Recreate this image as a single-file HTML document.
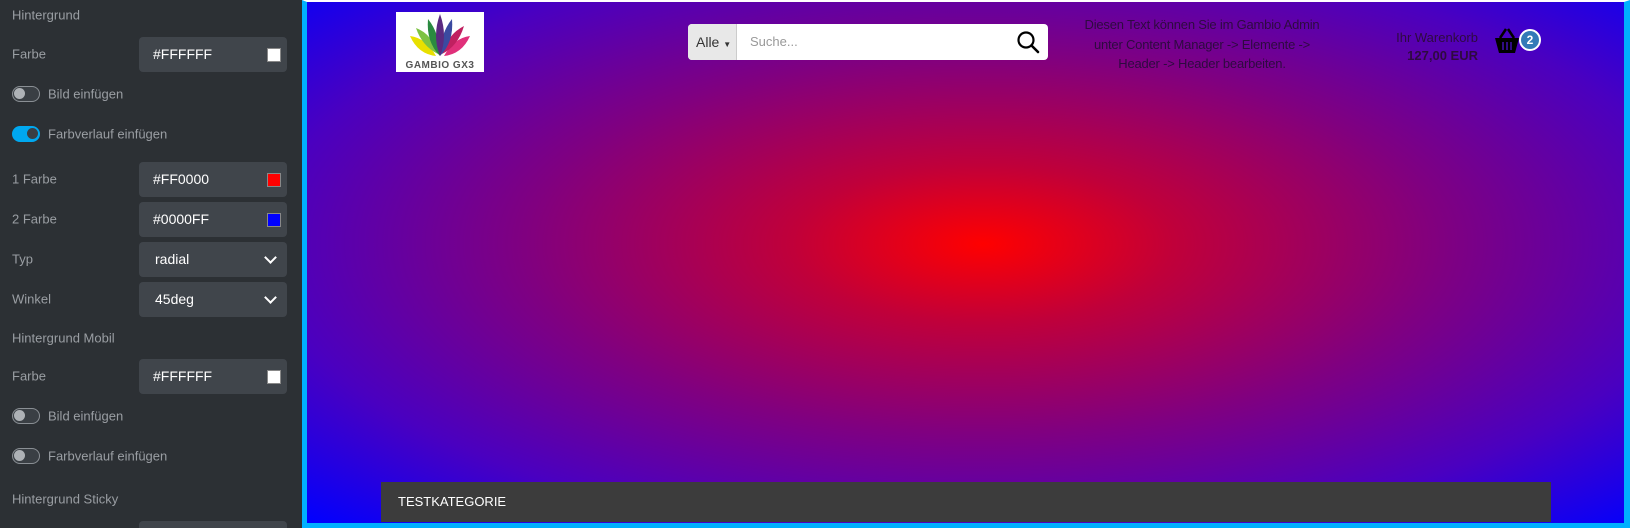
<!DOCTYPE html>
<html style="overflow:hidden;height:528px"><head><meta charset="utf-8"><style>
*{box-sizing:border-box;margin:0;padding:0}
body{width:1630px;height:528px;overflow:hidden;background:#fff;font-family:"Liberation Sans",sans-serif;position:relative}
#side{position:absolute;left:0;top:0;width:302px;height:528px;background:#2c3034;color:#9a9ea3;font-size:13px;overflow:hidden}
.lbl{position:absolute;left:12px;transform:translateY(-50%)}
.inp{position:absolute;left:139px;width:148px;height:35px;background:#40454b;border-radius:4px;color:#fff;font-size:14px;line-height:35px;padding-left:14px}
.sw{position:absolute;right:6px;top:11px;width:14px;height:14px;border:1px solid #888}
.chev{position:absolute;right:12px;top:11px;width:9px;height:9px;border-right:2px solid #fff;border-bottom:2px solid #fff;transform:rotate(45deg)}
.tg{position:absolute;left:12px;width:28px;height:16px;border-radius:8px;border:1.5px solid #8a8f94;background:#3a3f44}
.tg i{position:absolute;left:1px;top:1px;width:11px;height:11px;border-radius:50%;background:#aeb2b6}
.tg.on{background:#00a8f0;border-color:#00a8f0}
.tg.on i{left:auto;right:1px;background:#3a3f44}
.tl{position:absolute;left:48px;transform:translateY(-50%)}
#frame{position:absolute;left:302px;top:0;width:1328px;height:528px;border:5px solid #00b0ff;border-top:2px solid #fff;border-right-width:6px;overflow:hidden;
background:radial-gradient(farthest-corner at 676px 242px,#ff0000 0%,#c0003a 20%,#800080 48%,#4a00c0 75%,#0000ff 100%)}
</style></head><body>
<div id="side">
<div class="lbl" style="top:15px">Hintergrund</div>
<div class="lbl" style="top:54px">Farbe</div><div class="inp" style="top:37px">#FFFFFF<div class="sw" style="background:#fff"></div></div>
<div class="tg" style="top:86px"><i></i></div><div class="tl" style="top:94px">Bild einfügen</div>
<div class="tg on" style="top:126px"><i></i></div><div class="tl" style="top:134px">Farbverlauf einfügen</div>
<div class="lbl" style="top:179px">1 Farbe</div><div class="inp" style="top:162px">#FF0000<div class="sw" style="background:#f00"></div></div>
<div class="lbl" style="top:219px">2 Farbe</div><div class="inp" style="top:202px">#0000FF<div class="sw" style="background:#00f"></div></div>
<div class="lbl" style="top:259px">Typ</div><div class="inp" style="top:242px;padding-left:16px">radial<div class="chev"></div></div>
<div class="lbl" style="top:299px">Winkel</div><div class="inp" style="top:282px;padding-left:16px">45deg<div class="chev"></div></div>
<div class="lbl" style="top:338px">Hintergrund Mobil</div>
<div class="lbl" style="top:376px">Farbe</div><div class="inp" style="top:359px">#FFFFFF<div class="sw" style="background:#fff"></div></div>
<div class="tg" style="top:408px"><i></i></div><div class="tl" style="top:416px">Bild einfügen</div>
<div class="tg" style="top:448px"><i></i></div><div class="tl" style="top:456px">Farbverlauf einfügen</div>
<div class="lbl" style="top:499px">Hintergrund Sticky</div>
<div class="inp" style="top:521px;height:7px;border-radius:4px 4px 0 0"></div>
</div>
<div id="frame">
<div style="position:absolute;left:821px;top:-2px;width:128px;height:2px;background:#f5b800"></div>
<div style="position:absolute;left:89px;top:10px;width:88px;height:60px;background:#fff">
<svg width="88" height="60" viewBox="0 0 88 60">
<path d="M14 24 Q30 26 40 44 Q22 42 14 24Z" fill="#e8e000"/>
<path d="M20 16 Q36 22 42 42 Q26 34 20 16Z" fill="#7dc242"/>
<path d="M74 24 Q58 26 48 44 Q66 42 74 24Z" fill="#e0307a"/>
<path d="M68 14 Q52 22 46 42 Q62 34 68 14Z" fill="#c02060"/>
<path d="M32 7 Q44 22 44 44 Q30 30 32 7Z" fill="#2a8a40"/>
<path d="M56 7 Q44 22 44 44 Q58 30 56 7Z" fill="#3a4aa0"/>
<path d="M44 2 Q52 24 44 44 Q36 24 44 2Z" fill="#5a2a80"/>
<text x="44" y="56" text-anchor="middle" font-size="10" font-weight="bold" fill="#555" font-family="Liberation Sans" letter-spacing="0.5">GAMBIO GX3</text>
</svg></div>
<div style="position:absolute;left:381px;top:22px;width:360px;height:36px;background:#fff;border-radius:4px;overflow:hidden">
<div style="position:absolute;left:0;top:0;width:49px;height:36px;background:#e8e8e8;border-right:1px solid #ccc;font-size:14px;line-height:36px;padding-left:8px;color:#333">Alle <span style="font-size:8px">▼</span></div>
<div style="position:absolute;left:62px;top:0;line-height:36px;font-size:13px;color:#999">Suche...</div>
<svg style="position:absolute;right:8px;top:6px" width="24" height="24" viewBox="0 0 24 24"><circle cx="10" cy="10" r="7.5" fill="none" stroke="#000" stroke-width="2.2"/><path d="M15.5 15.5L22 22" stroke="#000" stroke-width="2.6" stroke-linecap="round"/></svg>
</div>
<div style="position:absolute;left:760px;top:13px;width:270px;text-align:center;font-size:13px;line-height:19.5px;color:#2e0a40;letter-spacing:-0.2px">Diesen Text können Sie im Gambio Admin<br>unter Content Manager -&gt; Elemente -&gt;<br>Header -&gt; Header bearbeiten.</div>
<div style="position:absolute;right:146px;top:27px;text-align:right;font-size:13px;line-height:18px;color:#2e0a40">Ihr Warenkorb<br><b>127,00 EUR</b></div>
<svg style="position:absolute;left:1187px;top:25px" width="26" height="28" viewBox="0 0 26 28"><path d="M6 11L12 2M20 11L14 2" stroke="#000" stroke-width="2.5" fill="none"/><path d="M1 11H25L21 26H5Z" fill="#000"/><path d="M9 15V23M13 15V23M17 15V23" stroke="#4010b0" stroke-width="1.5"/></svg>
<div style="position:absolute;left:1212px;top:27px;width:22px;height:22px;border-radius:50%;background:#337ab7;border:2px solid #fff;color:#fff;font-size:12px;font-weight:bold;text-align:center;line-height:18px">2</div>
<div style="position:absolute;left:74px;top:480px;width:1170px;height:40px;background:#3c3c3c;color:#fff;font-size:13px;line-height:40px;padding-left:17px">TESTKATEGORIE</div>
</div>
</body></html>
